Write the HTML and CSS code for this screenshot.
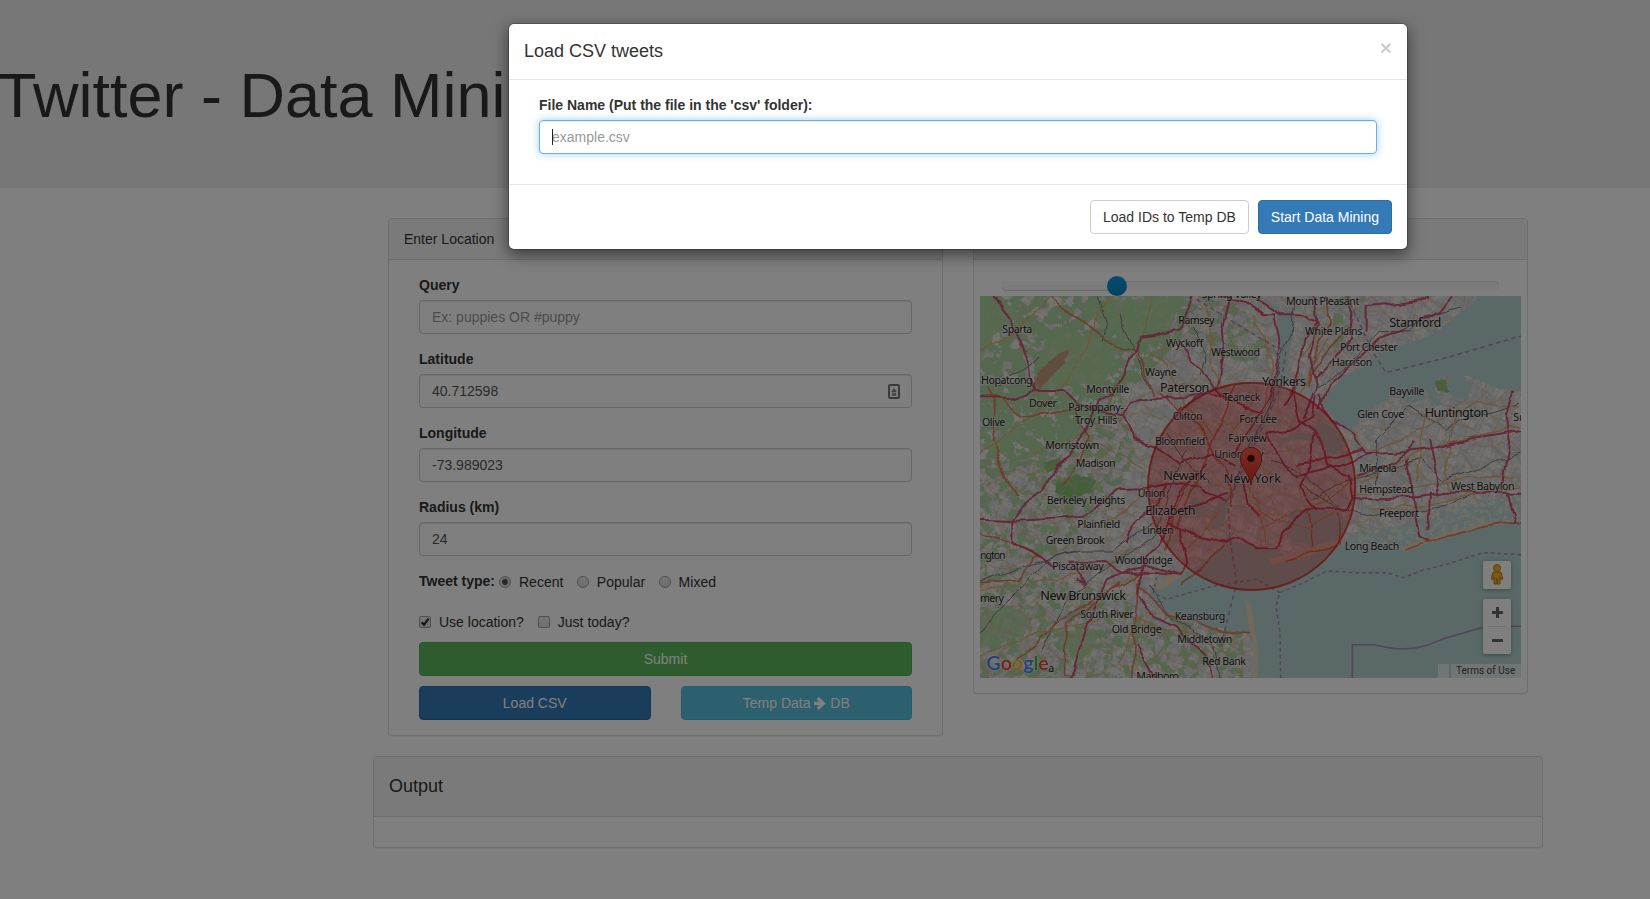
FILE: index.html
```html
<!DOCTYPE html>
<html lang="en">
<head>
<meta charset="utf-8">
<title>Twitter - Data Mining</title>
<link rel="stylesheet" href="styles.css">
</head>
<body>
<div class="page">
  <header class="jumbotron"><h1>Twitter - Data Mining</h1></header>
  <main class="container">
    <div class="columns">
      <section class="panel">
        <div class="panel-heading">Enter Location</div>
        <form class="form">
          <label class="label" for="q">Query</label>
          <input class="control" id="q" placeholder="Ex: puppies OR #puppy">
          <label class="label" for="lat">Latitude</label>
          <div class="with-icon">
            <input class="control" id="lat" value="40.712598">
            <svg class="card-icon" viewBox="0 0 12 15"><rect x="1" y="1" width="10" height="13" rx="1" fill="none" stroke="#777" stroke-width="2"/><path d="M6 3.2V6M4 8V6.8L6 5l2 1.800V8zM4 9.500h4v2H4z" fill="#888" stroke="#888" stroke-width=".6"/></svg>
          </div>
          <label class="label" for="lng">Longitude</label>
          <input class="control" id="lng" value="-73.989023">
          <label class="label" for="rad">Radius (km)</label>
          <input class="control" id="rad" value="24">
          <div class="options types">
            <b>Tweet type:</b>
            <span class="option"><i class="radio on"></i>Recent</span>
            <span class="option"><i class="radio"></i>Popular</span>
            <span class="option"><i class="radio"></i>Mixed</span>
          </div>
          <div class="options checks">
            <span class="option"><i class="check"><svg viewBox="0 0 12 12"><path d="M2.600 6.200 5 8.800 9.600 2.600" fill="none" stroke="#333" stroke-width="2.300"/></svg></i>Use location?</span>
            <span class="option"><i class="check"></i>Just today?</span>
          </div>
          <button type="button" class="btn success">Submit</button>
          <div class="pair">
            <button type="button" class="btn primary">Load CSV</button>
            <button type="button" class="btn info">Temp Data <svg class="arrow" viewBox="0 0 12 13"><path d="M0 4.700h5.200L2.700 2.200 4.900 0 11.700 6.500 4.900 13 2.700 10.800 5.200 8.300H0z" fill="#fff"/></svg> DB</button>
          </div>
        </form>
      </section>
      <section class="panel">
        <div class="panel-heading">Map</div>
        <div class="slider"><div class="selection"></div><div class="handle"></div></div>
        <div class="map">
<svg class="map-art" viewBox="0 0 1623 1146">
  <defs>
    <filter id="woods" class="tint" x="0" y="0" width="100%" height="100%">
      <feTurbulence type="fractalNoise" baseFrequency=".03" numOctaves="5" seed="8"/>
      <feColorMatrix values="0 0 0 0 .67  0 0 0 0 .81  0 0 0 0 .61  14 0 0 0 -5.500"/>
      <feComposite in2="SourceGraphic" operator="in"/>
    </filter>
    <filter id="woods2" class="tint" x="0" y="0" width="100%" height="100%">
      <feTurbulence type="fractalNoise" baseFrequency=".035" numOctaves="5" seed="21"/>
      <feColorMatrix values="0 0 0 0 .67  0 0 0 0 .81  0 0 0 0 .61  14 0 0 0 -7"/>
      <feComposite in2="SourceGraphic" operator="in"/>
    </filter>
    <filter id="town" class="tint" x="0" y="0" width="100%" height="100%">
      <feTurbulence type="fractalNoise" baseFrequency=".03" numOctaves="4" seed="3"/>
      <feColorMatrix values="0 0 0 0 .84  0 0 0 0 .84  0 0 0 0 .84  0 12 0 0 -5.200"/>
      <feComposite in2="SourceGraphic" operator="in"/>
    </filter>
    <filter id="islets" class="tint" x="0" y="0" width="100%" height="100%">
      <feTurbulence type="fractalNoise" baseFrequency=".06" numOctaves="3" seed="5"/>
      <feColorMatrix values="0 0 0 0 .84  0 0 0 0 .87  0 0 0 0 .82  0 14 0 0 -7.200"/>
      <feComposite in2="SourceGraphic" operator="in"/>
    </filter>
    <filter id="rough" x="-5%" y="-5%" width="110%" height="110%">
      <feTurbulence type="fractalNoise" baseFrequency=".08" numOctaves="3" result="n"/>
      <feDisplacementMap in="SourceGraphic" in2="n" scale="10" xChannelSelector="R" yChannelSelector="G"/>
    </filter>
    <filter id="wind" filterUnits="userSpaceOnUse" x="-30" y="-30" width="1690" height="1210">
      <feTurbulence type="fractalNoise" baseFrequency=".014" numOctaves="2" seed="4" result="n"/>
      <feDisplacementMap in="SourceGraphic" in2="n" scale="26" xChannelSelector="R" yChannelSelector="G"/>
    </filter>
    <pattern id="streets" width="74" height="62" patternUnits="userSpaceOnUse" patternTransform="rotate(24)">
      <path d="M0 12 30 16 74 12M0 44 40 39 74 44M14 0 18 30 14 62M52 0 48 34 52 62M18 30 48 34M30 16 32 39" class="minor"/>
    </pattern>
    <pattern id="arterials" width="150" height="128" patternUnits="userSpaceOnUse" patternTransform="rotate(-14)">
      <path d="M0 30Q50 50 90 30T150 30M40 0Q28 50 50 80T40 128M50 80Q100 70 118 92T150 98M90 30Q98 60 118 92" class="prim thin"/>
    </pattern>
    <linearGradient id="pin" x2="0" y2="1"><stop stop-color="#f55b4b"/><stop offset="1" stop-color="#cf3022"/></linearGradient>
  </defs>
  <rect width="1623" height="1146" fill="#e8e5df"/>
  <rect width="1623" height="1146" filter="url(#town)"/>
  <path filter="url(#woods)" d="M0 0H640L600 130 500 240 410 300 330 400 180 480 0 520z"/>
  <path filter="url(#woods2)" d="M0 250 420 290 470 500 380 620 240 780 0 800zM540 0H760L900 180 820 200 640 170zM0 800 330 850 480 940 790 1010V1146H0zM1060 0 1160 0 1060 190z"/>
  <path fill="#add19e" opacity=".8" filter="url(#rough)" d="M0 0H60L120 60 40 120 0 200zM230 90 420 150 360 270 280 260 230 290 160 250 200 120zM290 20 610 0 560 120 480 150 370 100zM40 420 120 400 100 440 20 480zM0 950 90 930 160 960 130 1020 0 1060zM240 1000 360 1010 330 1080 250 1060z"/>
  <path fill="#86bf74" filter="url(#rough)" d="M230 560 290 535 345 550 335 590 270 608 225 590zM190 500 240 485 245 515 200 530zM1358 255 1400 250 1404 290 1375 285z"/>
  <path fill="#c78d76" filter="url(#rough)" opacity=".8" d="M160 260 180 220 240 170 268 160 255 200 180 278z"/>
  <g filter="url(#wind)">
    <path d="M-20 500 180 470 330 390 500 230 640-20H1640V1160H-20z" fill="url(#streets)"/>
    <path d="M560 0H1623V1000H480L380 700 520 330z" fill="url(#streets)" transform="translate(20 15)" opacity=".7"/>
    <path d="M-20 500 180 470 330 390 500 230 640-20H1640V1160H-20z" fill="url(#arterials)"/>
  </g>

  <!-- Water -->
  <g class="water" filter="url(#rough)">
    <path d="M1640-10H1510L1460 35 1410 75 1370 110 1320 130 1260 150 1200 175 1160 210 1110 232 1070 262 1040 300 1030 330 1060 365 1092 400 1120 395 1155 355 1190 325 1240 300 1300 322 1335 310 1330 272 1360 325 1390 330 1366 290 1365 240 1410 240 1405 285 1425 305 1465 312 1472 275 1452 235 1500 255 1550 275 1640 290z"/>
    <path d="M890 50 945 55 938 120 918 220 884 320 838 420 795 500 780 560 745 610 730 700 765 735 830 757 895 757 925 795 990 777 1087 747 1270 762 1370 727 1510 690 1640 672V1160H826L830 1060 815 1012 670 987 590 952 520 922 508 872 610 837 670 797 738 745 735 690 690 700 700 640 770 560 790 480 850 370 880 270 898 190z"/>
    <path d="M930 650 980 637 1080 645 1100 680 1080 730 1000 750 940 735 915 700zM1010 370 1050 390 1090 430 1090 455 1060 478 1020 445 975 430 930 430 890 460 900 430 950 410 1000 415zM640 600 690 640 660 665 610 640z"/>
  </g>
  <path d="M1100 712 1260 690 1370 650 1500 620 1623 590V672L1510 690 1370 727 1270 755 1110 750z" fill="#b5d0d0" opacity=".75"/>
  <path d="M1100 712 1260 690 1370 650 1500 620 1623 590V672L1510 690 1370 727 1270 755 1110 750z" filter="url(#islets)"/>
  <path class="sand" d="M867 807 868 790 990 752 1085 735 1087 747 990 777zM1265 755 1370 720 1510 680 1623 668 1623 676 1510 694 1370 733 1268 770zM795 910 812 925 826 1010 834 1080 832 1146H822L820 1040 806 990 800 940zM510 872 560 842 620 820 612 838 540 882z"/>

  <g filter="url(#wind)">
    <!-- Railways -->
    <g class="rail">
      <path d="M0 855 160 800 300 765 390 765 520 680M0 1015 70 930 200 790 290 770M180 1070 270 900 400 800 520 730 560 600 620 460M510 870 570 960 700 1040 720 1146M944 0 930 110 900 190 870 330 800 470 740 620M1010 270 1100 210 1200 110 1290 110 1340 60 1440 30M1000 610 1060 570 1320 490 1390 550 1623 475M1190 570V430L1280 330 1400 400 1440 370 1623 325M960 560 1080 640 1190 660 1270 650 1400 630 1500 590"/>
      <path d="M60 270 90 240 150 210 180 180M420 60 470 180 510 280M640 90 680 170 660 240M350 0 380 80 370 140M560 410 620 500 690 560M870 500 950 520 1040 600 1100 650"/>
    </g>

    <!-- Orange and red roads -->
    <g class="prim">
      <path d="M0 170 90 120 150 60 210 0M380 0 350 70 320 140 260 260 200 330 100 400 0 470M520 0 490 110 470 150M510 170 560 210 620 330 700 420M410 260 380 330 420 390 470 430M530 290 610 260 690 280 760 270M680 20 700 120 690 200 730 280M820 60 860 150 880 200 850 330M1020 100 960 200 940 300M1050 120 1000 200 960 300M1150 480 1240 440 1340 390 1430 350 1500 320 1623 335M1140 560 1220 520 1310 470 1400 440 1623 390M1130 600 1300 575 1460 545 1623 540M1180 640 1400 620 1500 590 1623 570M830 640 900 680 980 700 1060 650M840 700 1040 610 1140 540M800 560 840 640 860 740M740 420 790 360 830 270M620 760 680 700 720 640M0 880 130 870 260 840 360 820 450 760M0 1080 150 1020 300 980 420 950 560 1000M420 1100 470 990 640 1010 750 1080M380 680 440 640 520 560M150 470 240 450 300 420 440 480 500 530M1340 340 1320 440 1310 560M1430 350 1400 500 1410 600"/>
    </g>
    <g class="trunk">
      <path d="M215 0 270 50 320 90 380 135 430 165 470 160 500 240 520 300M0 300 60 310 120 365 180 358 280 340 330 420 300 500 240 570M20 270 45 350 35 430 80 550 110 610M0 713 90 740 170 770 120 850 0 860M110 1100 230 980 350 900 460 850 500 800M250 1146 260 980 420 860M475 850 470 960 455 1146M480 870 560 950 700 1000 810 1010M730 740 680 800 600 870M980 637 1000 750M1070 650 1087 747M1040 0 1050 80 1020 130 980 270M1270 762 1370 732 1510 692 1623 676M920 797 990 767 1080 750M980 260 1050 150 1120 90"/>
      <path d="M540 290 610 350 660 390 730 520 760 630M650 520 590 640 560 760M770 270 700 430 640 580 590 700"/>
    </g>
    <!-- Motorways -->
    <g class="moto">
      <path d="M30-20 90 70 120 130 145 190 150 250 165 290M-20 290 20 310 90 312 170 285 250 285 290 325 350 345 430 358 460 320 530 305 610 300 680 290 770 320 800 340"/>
      <path d="M640-20 600 100 520 120 480 125 465 170 430 230 400 290 350 320 320 400 270 470 230 510 190 580M430 358 460 430 530 450 600 500 700 470 760 510"/>
      <path d="M600 130 630 190 680 240 720 300 790 330 850 350M750-20 725 90 730 180 715 270 650 300 600 340M720 0 800 20 850 55 880 55 900 160 885 230 870 300 820 380 760 480"/>
      <path d="M830 10 900 55 970 55 1010 80 970 130 960 200 940 280 910 330M1000 0 1010 90 990 180 1010 280 970 370M1100 0 1120 60 1110 130 1050 200 1000 250M1160 110 1160 30 1260 20 1350 5M1020 340 1050 260 1130 190 1200 130 1280 100 1380 45 1430-20M860 410 940 400 1000 360 1010 300M860 410 900 500 950 540 1080 510 1160 475 1250 470 1340 460 1480 425 1640 400"/>
      <path d="M940 290 960 380 1000 410 1030 440 1040 510 1110 540 1120 610 1100 640 980 637 940 680 910 710 895 757 830 757 770 725 740 735 660 720 600 700 560 680 610 640 680 620 740 590"/>
      <path d="M790 560 800 620 840 660M1000 410 990 510 960 570 1010 640M1120 610 1200 610 1300 605 1400 590 1640 590M1020 290 1050 370 1120 420 1160 475M1350 430 1380 560 1370 600M1600 290 1580 360 1590 440 1570 560M1580 590 1605 680M1280 490 1300 600 1320 720 1350 735M1350 590 1345 700M950 500 1050 490 1150 460M1130 540 1250 500 1300 440"/>
      <path d="M-20 668 100 672 220 665 310 660 420 580 500 575 560 560 650 570 680 590 740 610M100 672 100 740 180 780 220 810M100 672 130 630 190 582M270 1160 320 980 380 850 460 820 500 810 600 840 625 800 600 700M480 850 475 900 520 960 590 990 620 1030 680 1080 700 1160M475 850 500 780 545 740 570 660 610 580 680 500M440 740 460 680 520 630 560 560M470 1050 520 1146M270 800 370 795 430 830 520 830 600 840M290 850 320 860 270 800"/>
    </g>
  </g>

  <!-- Boundaries -->
  <g class="border">
    <path d="M650 10 780 90 880 150 918 165 900 280 830 430 770 560 745 640 750 730 770 860 735 1000 720 1060M1100 0 1180 170 1218 230 1400 185 1623 120" stroke-dasharray="14 10"/>
    <path d="M1623 776 1510 770 1400 805 1320 825 1270 845 1220 830 1130 830 1040 825 960 865 900 890 888 930 900 1010 902 1146M900 890 830 850 700 870 560 910 520 890 530 840" stroke-dasharray="11 9"/>
    <path d="M1117 1146V1046H1185Q1270 1070 1340 1048L1400 1025 1500 997 1560 991H1623"/>
  </g>
  <circle cx="815" cy="571" r="311" fill="#d00" fill-opacity=".27" stroke="#d02020" stroke-opacity=".75" stroke-width="6"/>

  <g class="town-names">
    <g transform="translate(-30 -18)">
      <text x="97" y="128" textLength="90">Sparta</text><text x="33" y="282" textLength="155">Hopatcong</text><text x="177" y="352" textLength="84">Dover</text>
      <text x="295" y="362" textLength="166">Parsippany-</text><text x="315" y="401" textLength="127">Troy Hills</text><text x="349" y="308" textLength="129">Montville</text>
      <text x="525" y="259" textLength="95">Wayne</text><text x="625" y="103" textLength="108">Ramsey</text><text x="588" y="172" textLength="112">Wyckoff</text>
      <text class="big" x="570" y="307" textLength="148">Paterson</text><text x="608" y="390" textLength="90">Clifton</text><text x="555" y="464" textLength="151">Bloomfield</text>
      <text x="36" y="407" textLength="70">Olive</text><text x="226" y="477" textLength="162">Morristown</text><text x="317" y="531" textLength="120">Madison</text>
      <text class="big" x="580" y="570" textLength="128">Newark</text>
    </g>
    <g transform="translate(540 -18)"><text x="125" y="24" textLength="180">Spring Valley</text><text x="153" y="198" textLength="147">Westwood</text></g>
    <g transform="translate(810 -18)">
      <text x="108" y="46" textLength="220">Mount Pleasant</text><text class="big" x="36" y="287" textLength="132">Yonkers</text><text x="165" y="136" textLength="172">White Plains</text>
      <text x="270" y="183" textLength="173">Port Chester</text><text x="245" y="229" textLength="122">Harrison</text><text class="big" x="418" y="111" textLength="156">Stamford</text>
      <text x="418" y="315" textLength="105">Bayville</text><text x="322" y="384" textLength="141">Glen Cove</text><text class="big" x="524" y="380" textLength="191">Huntington</text>
      <text x="790" y="393">Sm</text><text x="328" y="547" textLength="112">Mineola</text><text x="328" y="609" textLength="162">Hempstead</text><text x="603" y="600" textLength="191">West Babylon</text>
    </g>
    <g transform="translate(480 237)">
      <text x="248" y="78" textLength="113">Teaneck</text><text x="298" y="145" textLength="113">Fort Lee</text><text x="265" y="200" textLength="116">Fairview</text>
      <text x="223" y="249" textLength="147">Union City</text><text class="big" x="251" y="323" textLength="172">New York</text>
    </g>
    <g transform="translate(-30 582)">
      <text x="503" y="21" textLength="83">Union</text><text x="230" y="42" textLength="236">Berkeley Heights</text><text class="big" x="526" y="75" textLength="151">Elizabeth</text>
      <text x="322" y="113" textLength="129">Plainfield</text><text x="517" y="131" textLength="94">Linden</text><text x="227" y="163" textLength="177">Green Brook</text>
      <text x="30" y="207" textLength="77">ngton</text><text x="247" y="240" textLength="154">Piscataway</text><text x="434" y="223" textLength="174">Woodbridge</text>
      <text x="30" y="337" textLength="72">mery</text><text class="big" x="211" y="330" textLength="257">New Brunswick</text><text x="331" y="383" textLength="160">South River</text>
      <text x="425" y="430" textLength="150">Old Bridge</text><text x="614" y="390" textLength="152">Keansburg</text><text x="622" y="458" textLength="165">Middletown</text>
      <text x="697" y="526" textLength="131">Red Bank</text><text x="499" y="571" textLength="128">Marlboro</text><text x="235" y="545">a</text>
    </g>
    <g transform="translate(810 582)"><text x="387" y="80" textLength="120">Freeport</text><text x="284" y="180" textLength="164">Long Beach</text></g>
  </g>
  <path d="M813 567C810 530 781 520 781 486A32 32 0 0 1 845 486C845 520 816 530 813 567z" fill="url(#pin)" stroke="#a32a1e" stroke-width="3"/>
  <circle cx="813" cy="487" r="11" fill="#4a0f0c"/>
  <text class="logo" x="19" y="1122" textLength="187"><tspan fill="#4285f4">G</tspan><tspan fill="#ea4335">o</tspan><tspan fill="#fbbc05">o</tspan><tspan fill="#4285f4">g</tspan><tspan fill="#34a853">l</tspan><tspan fill="#ea4335">e</tspan></text>
</svg>
          <div class="map-tools">
            <div class="tool"><svg viewBox="0 0 28 28"><path d="M10 11h8l1.800 7-1.600.8-1.200-3V23H11v-7.200l-1.200 3-1.600-.8z" fill="#f5b32a" stroke="#b27a14" stroke-width=".9"/><circle cx="14" cy="7" r="3.500" fill="#f5b32a" stroke="#b27a14" stroke-width=".9"/><path d="M14 17v6" stroke="#a66d10"/></svg></div>
            <div class="tool zoom"><svg viewBox="0 0 28 55"><path d="M9 13.500h11M14.500 8v11M9 41.500h11" stroke="#666" stroke-width="3"/><path d="M5 27.500h19" stroke="#e0e0e0"/></svg></div>
          </div>
          <div class="terms"><span class="stub"></span><span class="terms-text">Terms of Use</span></div>
        </div>
      </section>
    </div>
    <section class="panel output">
      <div class="panel-heading"><h4>Output</h4></div>
      <div class="output-body"></div>
    </section>
  </main>
</div>
<div class="backdrop">
  <div class="modal">
    <div class="modal-header"><h4>Load CSV tweets</h4><span class="close">×</span></div>
    <div class="modal-body">
      <label class="label" for="file">File Name (Put the file in the 'csv' folder):</label>
      <div class="with-icon"><input class="control focused" id="file" placeholder="example.csv"><span class="caret"></span></div>
    </div>
    <div class="modal-footer"><button class="btn default">Load IDs to Temp DB</button><button class="btn primary">Start Data Mining</button></div>
  </div>
</div>
</body>
</html>
```
FILE: styles.css
```css
* { box-sizing: border-box; }
html, body { margin: 0; height: 100%; overflow: hidden; }
body { position: relative; font: 14px/20px "Liberation Sans", Arial, sans-serif; color: #333; background: #fff; }
h1, h4 { margin: 0; font-weight: 500; }
h4 { font-size: 18px; line-height: 20px; }

.page { width: 1916px; }
.jumbotron { height: 188px; padding-top: 60px; margin-bottom: 30px; background: #eee; }
.jumbotron h1 { margin-left: -2px; font-size: 63px; line-height: 70px; }
.container { width: 1170px; margin: 0 auto; }
.columns { display: flex; align-items: flex-start; gap: 30px; padding: 0 15px; }
.panel { flex: 1; border: 1px solid #ddd; border-radius: 4px; background: #fff; box-shadow: 0 1px 1px rgba(0,0,0,.05); }
.panel-heading { padding: 10px 15px; border-bottom: 1px solid #ddd; border-radius: 3px 3px 0 0; background: #f5f5f5; }

.form { display: flex; flex-direction: column; padding: 15px 30px; }
.label { display: block; margin-bottom: 5px; font-weight: bold; }
.control { display: block; width: 100%; height: 34px; margin: 0 0 15px; padding: 6px 12px; border: 1px solid #ccc; border-radius: 4px; background: #fff; color: #555; font: inherit; box-shadow: inset 0 1px 1px rgba(0,0,0,.075); outline: 0; }
.control::placeholder { color: #999; opacity: 1; }
.with-icon { position: relative; }
.card-icon { position: absolute; right: 12px; top: 10px; width: 12px; height: 15px; }
.options { display: flex; height: 20px; }
.types b { margin-right: 4px; }
.types .option { padding-top: 1px; }
.checks { margin: 21px 0 10px; }
.option { display: flex; }
.option + .option { margin-left: 13.5px; }
.checks .option + .option { margin-left: 14px; }
.radio, .check { width: 12px; height: 12px; margin: 4px 8px 0 0; border: 1px solid #a0a0a0; background: linear-gradient(#eee, #dcdcdc); }
.radio { border-radius: 50%; }
.radio.on { background: radial-gradient(circle, #555 0 2.6px, #dcdcdc 3.3px); }
.check { border-radius: 2px; }
.check svg { display: block; width: 12px; height: 12px; margin: -1px; }

.btn { height: 34px; padding: 6px 12px; border: 1px solid; border-radius: 4px; color: #fff; font: inherit; text-align: center; white-space: nowrap; }
.success { background: #5cb85c; border-color: #4cae4c; }
.primary { background: #337ab7; border-color: #2e6da4; }
.info { background: #5bc0de; border-color: #46b8da; }
.default { background: #fff; border-color: #ccc; color: #333; }
.pair { display: grid; grid-template-columns: 1fr 1fr; gap: 30px; margin-top: 10px; }
.arrow { width: 12px; height: 13px; vertical-align: -2px; }

.slider { position: relative; width: 497px; height: 10px; margin: 21px 0 5px 28px; border-radius: 4px; background: linear-gradient(#f5f5f5, #f9f9f9); box-shadow: inset 0 1px 2px rgba(0,0,0,.1); }
.selection { width: 115px; height: 10px; border-radius: 4px; background: linear-gradient(#f9f9f9, #f5f5f5); box-shadow: inset 0 -1px 0 rgba(0,0,0,.15); }
.handle { position: absolute; left: 105px; top: -5px; width: 20px; height: 20px; border-radius: 50%; background: linear-gradient(#149bdf, #0480be); }

.map { position: relative; width: 541px; height: 382px; margin: 0 0 15px 6px; overflow: hidden; }
.map-art { display: block; width: 541px; height: 382px; }
.tint * { color-interpolation-filters: sRGB; }
.minor { fill: none; stroke: #b6b4b2; stroke-width: 1.5; }
.water { fill: #b5d0d0; }
.sand { fill: #e3d3b8; }
.rail, .prim, .trunk, .moto, .border { fill: none; stroke-linejoin: round; }
.rail { stroke: #777; stroke-width: 3; }
.prim { stroke: #dfa96c; stroke-width: 4; }
.thin { stroke-width: 2.5; opacity: .8; }
.trunk { stroke: #dc7a5c; stroke-width: 5; }
.moto { stroke: #cc4f70; stroke-width: 6; }
.border { stroke: #a888b4; stroke-width: 4.5; }
.town-names text { font: 32px "Noto Sans", sans-serif; fill: #222; stroke: rgba(255,255,255,.4); stroke-width: 5; paint-order: stroke; }
.town-names .big { font-size: 38px; }
.logo { font: 600 59px Lato, sans-serif; stroke: rgba(255,255,255,.6); stroke-width: 3; paint-order: stroke; }
.map-tools { position: absolute; right: 10px; top: 265px; display: grid; gap: 10px; }
.tool { width: 28px; height: 28px; border-radius: 2px; background: #fff; box-shadow: 0 1px 4px rgba(0,0,0,.3); }
.tool svg { display: block; }
.zoom { height: 55px; }
.terms { position: absolute; right: 0; bottom: 0; display: flex; gap: 2px; height: 14px; font: 10px/14px Roboto, sans-serif; color: #444; }
.stub { width: 11px; background: rgba(245,245,245,.7); }
.terms-text { width: 70px; padding-left: 5px; background: rgba(245,245,245,.7); white-space: nowrap; }

.output { margin-top: 20px; }
.output .panel-heading { padding: 19px 15px 20px; }
.output-body { height: 30px; }

.backdrop { position: absolute; inset: 0; background: rgba(0,0,0,.5); }
.modal { width: 900px; height: 227px; margin: 23px 0 0 508px; border: 1px solid rgba(0,0,0,.2); border-radius: 6px; background: #fff; background-clip: padding-box; box-shadow: 0 5px 15px rgba(0,0,0,.5); }
.modal-header { display: flex; justify-content: space-between; height: 56px; padding: 15px; border-bottom: 1px solid #e5e5e5; }
.modal-header h4 { line-height: 25px; }
.close { margin-top: -2px; font-size: 21px; font-weight: bold; line-height: 21px; color: #000; opacity: .2; }
.modal-body { height: 104px; padding: 15px 30px; }
.focused { border-color: #66afe9; box-shadow: inset 0 1px 1px rgba(0,0,0,.075), 0 0 8px rgba(102,175,233,.6); }
.caret { position: absolute; left: 13px; top: 9px; width: 1px; height: 16px; background: #222; }
.modal-footer { display: flex; justify-content: flex-end; gap: 9px; padding: 15px; border-top: 1px solid #e5e5e5; }
```
